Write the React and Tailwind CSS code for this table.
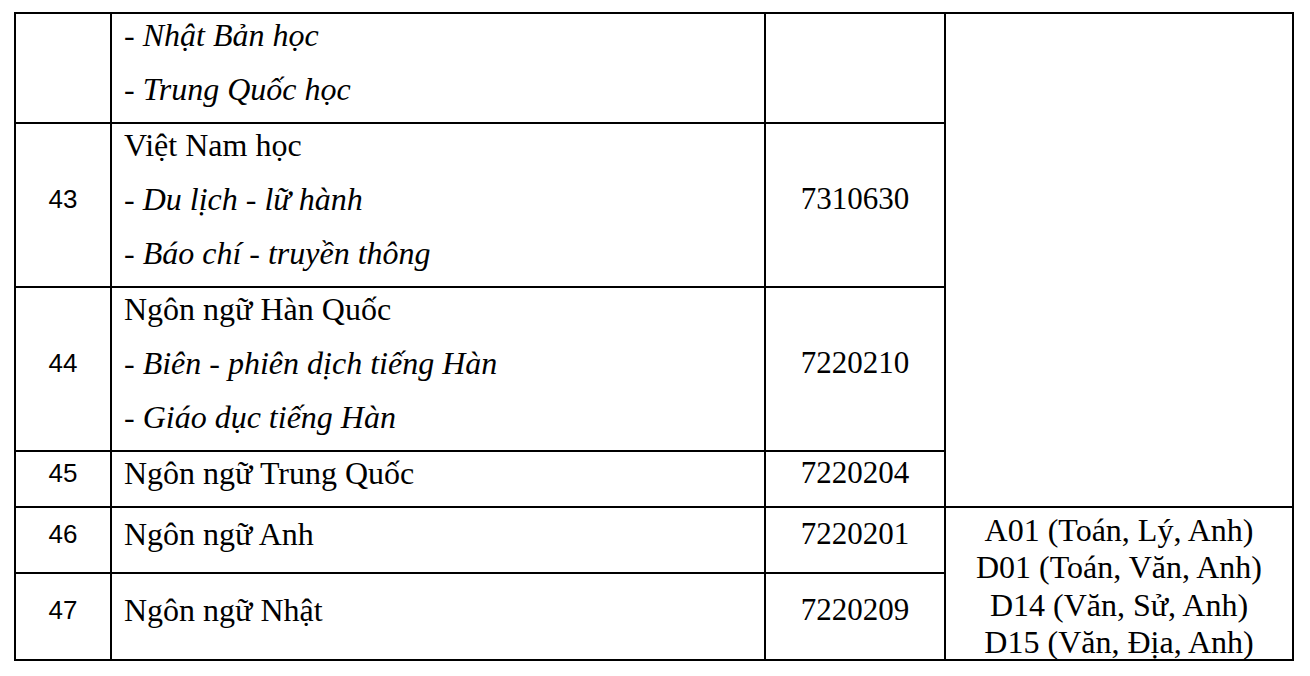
import React from "react";

const serif = "[font-family:'Liberation_Serif','Times_New_Roman',serif]";
const sans = "[font-family:'Liberation_Sans',Arial,sans-serif]";

function Num({ children }) {
  return (
    <div className={`bg-white flex items-center justify-center pb-[13px] ${sans} text-[26px] leading-[54px] text-black`}>
      {children}
    </div>
  );
}

function Name({ lines }) {
  return (
    <div className={`bg-white flex flex-col justify-center pl-[12px] pb-[13px] ${serif} text-[32px] leading-[54px] text-black whitespace-nowrap`}>
      {lines.map((l, i) => (
        <div key={i} className={l.i ? "italic" : ""}>
          {l.t}
        </div>
      ))}
    </div>
  );
}

function Code({ children }) {
  return (
    <div className={`bg-white flex items-center justify-center pb-[13px] ${serif} text-[31px] leading-[54px] text-black`}>
      {children}
    </div>
  );
}

export default function App() {
  return (
    <div className="min-h-screen bg-white pt-[12px] pl-[14px]">
      <div className="w-[1280px] grid grid-cols-[94px_652px_178px_346px] grid-rows-[108px_162px_162px_54px_64px_85px] gap-[2px] bg-black p-[2px]">
        <div className="bg-white" />
        <Name lines={[{ t: "- Nhật Bản học", i: true }, { t: "- Trung Quốc học", i: true }]} />
        <div className="bg-white" />
        <div className="bg-white row-span-4" />

        <Num>43</Num>
        <Name
          lines={[
            { t: "Việt Nam học" },
            { t: "- Du lịch - lữ hành", i: true },
            { t: "- Báo chí - truyền thông", i: true },
          ]}
        />
        <Code>7310630</Code>

        <Num>44</Num>
        <Name
          lines={[
            { t: "Ngôn ngữ Hàn Quốc" },
            { t: "- Biên - phiên dịch tiếng Hàn", i: true },
            { t: "- Giáo dục tiếng Hàn", i: true },
          ]}
        />
        <Code>7220210</Code>

        <Num>45</Num>
        <Name lines={[{ t: "Ngôn ngữ Trung Quốc" }]} />
        <Code>7220204</Code>

        <Num>46</Num>
        <Name lines={[{ t: "Ngôn ngữ Anh" }]} />
        <Code>7220201</Code>
        <div className={`bg-white row-span-2 flex flex-col items-center justify-center pt-[6px] ${serif} text-[32px] leading-[37.3px] text-black whitespace-nowrap`}>
          <div>A01 (Toán, Lý, Anh)</div>
          <div>D01 (Toán, Văn, Anh)</div>
          <div>D14 (Văn, Sử, Anh)</div>
          <div>D15 (Văn, Địa, Anh)</div>
        </div>

        <Num>47</Num>
        <Name lines={[{ t: "Ngôn ngữ Nhật" }]} />
        <Code>7220209</Code>
      </div>
    </div>
  );
}
